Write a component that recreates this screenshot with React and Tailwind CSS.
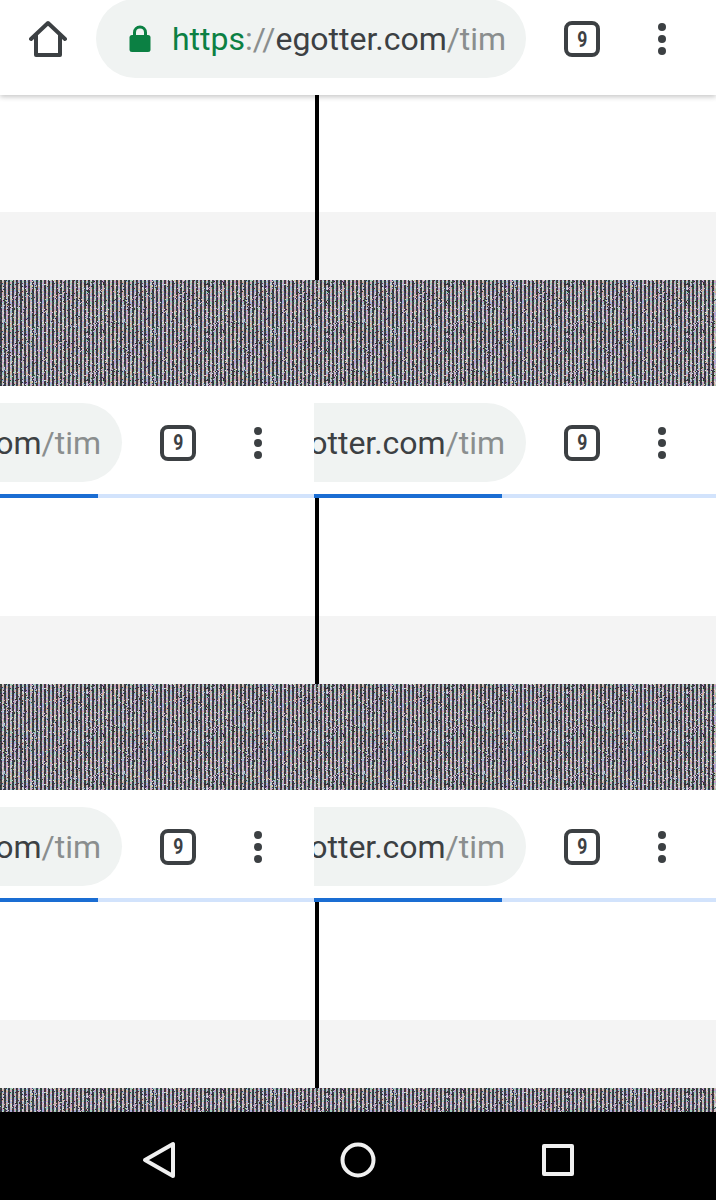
import { useMemo } from 'react'

const font = { fontFamily: 'Roboto, sans-serif' }

function makeNoise(w, h) {
  // small seeded generator so the static looks the same on every run
  let s = 12345
  const rand = () => {
    s = (s + 0x6d2b79f5) | 0
    let t = Math.imul(s ^ (s >>> 15), 1 | s)
    t = (t + Math.imul(t ^ (t >>> 7), 61 | t)) ^ t
    return ((t ^ (t >>> 14)) >>> 0) / 4294967296
  }
  const dark = ['#40304c', '#2c4a3a', '#523838', '#34405c', '#4a4a50', '#2e2e34']
  const light = ['#c4c4c4', '#c0a0d0', '#a0d0b4', '#d4b8a0', '#a0b4dc', '#d8d8d8', '#d0a8b8']
  const cells = []
  for (let x = 0; x < w; x++) {
    const isDark = x % 4 < 2
    const colors = isDark ? dark : light
    for (let y = 0; y < h; y++) {
      const flip = rand() < 0.05
      const list = flip ? (isDark ? light : dark) : colors
      cells.push({ x, y, fill: list[Math.floor(rand() * list.length)] })
    }
  }
  return cells
}

function NoiseBand({ id, height }) {
  const cells = useMemo(() => makeNoise(120, 48), [])
  return (
    <svg className={`block w-full shrink-0 ${height}`}>
      <defs>
        <pattern id={id} width="120" height="48" patternUnits="userSpaceOnUse">
          {cells.map((c) => (
            <rect key={`${c.x}-${c.y}`} x={c.x} y={c.y} width="1" height="1" fill={c.fill} />
          ))}
        </pattern>
      </defs>
      <rect width="100%" height="100%" fill={`url(#${id})`} />
    </svg>
  )
}

function TabCount() {
  return (
    <div className="flex h-[36px] w-[36px] shrink-0 items-center justify-center rounded-[8px] border-[4px] border-[#3c4043] text-[22px] font-bold text-[#3c4043]" style={font}>
      <span className="inline-block scale-x-[0.8]">9</span>
    </div>
  )
}

function Dots() {
  return (
    <div className="flex h-[32px] w-[8px] shrink-0 flex-col justify-between">
      <div className="h-[8px] w-[8px] rounded-full bg-[#3c4043]" />
      <div className="h-[8px] w-[8px] rounded-full bg-[#3c4043]" />
      <div className="h-[8px] w-[8px] rounded-full bg-[#3c4043]" />
    </div>
  )
}

function Controls() {
  return (
    <div className="flex min-w-0 flex-1 items-center pl-[38px]">
      <TabCount />
      <div className="ml-[58px]">
        <Dots />
      </div>
    </div>
  )
}

function TopBar() {
  return (
    <div className="relative z-10 h-[95px] shrink-0 bg-white shadow-[0_2px_5px_rgba(0,0,0,0.22)]">
      <div className="flex h-[78px] items-center">
        <div className="flex w-[96px] shrink-0 justify-center">
          <svg width="38" height="38" viewBox="0 0 38 38" fill="none" stroke="#3c4043" strokeWidth="4" strokeLinejoin="round" strokeLinecap="round">
            <path d="M2 19 L19 3 L36 19 M7 15 V35 H31 V15" />
          </svg>
        </div>
        <div className="-mt-px flex h-[79px] w-[430px] shrink-0 items-center overflow-hidden rounded-full bg-[#f0f3f2] pl-[33px]">
          <svg width="22" height="27" viewBox="0 0 22 27" className="shrink-0">
            <path d="M5.5 11 V7.5 a5.5 5.5 0 0 1 11 0 V11" fill="none" stroke="#0b8043" strokeWidth="3" />
            <rect x="0.5" y="10" width="21" height="17" rx="2.5" fill="#0b8043" />
          </svg>
          <span className="ml-[21px] whitespace-nowrap text-[32px] leading-none tracking-[-0.03px] text-[#3c4043]" style={font}>
            <span className="text-[#0b8043]">https</span>
            <span className="text-[#8a8e8e]">://</span>
            egotter.com<span className="text-[#8a8e8e]">/tim</span>
          </span>
        </div>
        <Controls />
      </div>
    </div>
  )
}

function HalfBar({ width, pill, progress }) {
  return (
    <div className={`flex flex-col ${width}`}>
      <div className="flex h-[108px] items-start pt-[17px]">
        <div className={`flex h-[79px] shrink-0 items-center justify-end overflow-hidden rounded-r-full bg-[#f0f3f2] pr-[21px] ${pill}`}>
          <span className="whitespace-nowrap text-[32px] leading-none tracking-[-0.03px] text-[#3c4043]" style={font}>
            egotter.com<span className="text-[#8a8e8e]">/tim</span>
          </span>
        </div>
        <div className="flex h-[79px] min-w-0 flex-1">
          <Controls />
        </div>
      </div>
      <div className="h-[4px] bg-[#d2e3fc]">
        <div className={`h-full bg-[#1a6dd3] ${progress}`} />
      </div>
    </div>
  )
}

function PageBar() {
  return (
    <div className="flex shrink-0">
      <HalfBar width="w-[314px]" pill="w-[122px]" progress="w-[98px]" />
      <HalfBar width="w-[402px]" pill="w-[212px]" progress="w-[188px]" />
    </div>
  )
}

function PageColumn({ white, width }) {
  return (
    <div className={`flex flex-col ${width}`}>
      <div className={`bg-white ${white}`} />
      <div className="h-[68px] bg-[#f4f4f4]" />
    </div>
  )
}

function PagePanel({ white }) {
  return (
    <div className="flex shrink-0">
      <PageColumn white={white} width="w-[315px]" />
      <div className="w-[4px] bg-black" />
      <PageColumn white={white} width="flex-1" />
    </div>
  )
}

function NavBar() {
  return (
    <div className="grid h-[88px] shrink-0 grid-cols-3 items-center bg-black px-[60px] pt-[8px]">
      <div className="flex justify-center">
        <svg width="34" height="38" viewBox="0 0 34 38" fill="none" stroke="#f1f1f1" strokeWidth="4" strokeLinejoin="round">
          <path d="M31 3 V35 L3 19 Z" />
        </svg>
      </div>
      <div className="flex justify-center pl-[1px]">
        <svg width="36" height="36" viewBox="0 0 36 36" fill="none" stroke="#f1f1f1" strokeWidth="4">
          <circle cx="18" cy="18" r="15.5" />
        </svg>
      </div>
      <div className="flex justify-center pl-[2px]">
        <div className="h-[32px] w-[32px] rounded-[2px] border-[4px] border-[#f1f1f1]" />
      </div>
    </div>
  )
}

export default function App() {
  return (
    <div className="flex h-[1200px] w-[716px] flex-col overflow-hidden bg-white">
      <TopBar />
      <PagePanel white="h-[117px]" />
      <NoiseBand id="noise-a" height="h-[106px]" />
      <PageBar />
      <PagePanel white="h-[118px]" />
      <NoiseBand id="noise-b" height="h-[106px]" />
      <PageBar />
      <PagePanel white="h-[118px]" />
      <NoiseBand id="noise-c" height="h-[24px]" />
      <NavBar />
    </div>
  )
}
